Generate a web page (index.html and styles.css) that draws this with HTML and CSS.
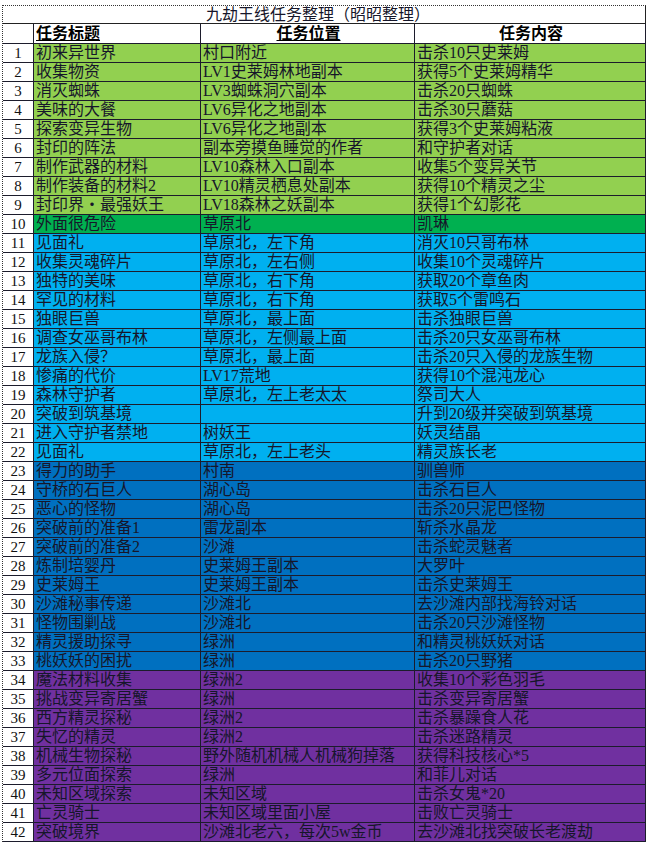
FILE: index.html
```html
<!DOCTYPE html>
<html lang="zh-CN">
<head>
<meta charset="utf-8">
<title>九劫主线任务整理</title>
<link rel="stylesheet" href="styles.css">
</head>
<body>
<div class="sheet">
  <div class="title">九劫王线任务整理（昭昭整理）</div>
  <div class="row head">
    <div class="num"></div>
    <div class="c c-title"><u>任务标题</u></div>
    <div class="c center"><u>任务位置</u></div>
    <div class="c center">任务内容</div>
  </div>
  <div class="row g1"><div class="num">1</div><div class="c">初来异世界</div><div class="c">村口附近</div><div class="c">击杀10只史莱姆</div></div>
  <div class="row g1"><div class="num">2</div><div class="c">收集物资</div><div class="c">LV1史莱姆林地副本</div><div class="c">获得5个史莱姆精华</div></div>
  <div class="row g1"><div class="num">3</div><div class="c">消灭蜘蛛</div><div class="c">LV3蜘蛛洞穴副本</div><div class="c">击杀20只蜘蛛</div></div>
  <div class="row g1"><div class="num">4</div><div class="c">美味的大餐</div><div class="c">LV6异化之地副本</div><div class="c">击杀30只蘑菇</div></div>
  <div class="row g1"><div class="num">5</div><div class="c">探索变异生物</div><div class="c">LV6异化之地副本</div><div class="c">获得3个史莱姆粘液</div></div>
  <div class="row g1"><div class="num">6</div><div class="c">封印的阵法</div><div class="c">副本旁摸鱼睡觉的作者</div><div class="c">和守护者对话</div></div>
  <div class="row g1"><div class="num">7</div><div class="c">制作武器的材料</div><div class="c">LV10森林入口副本</div><div class="c">收集5个变异关节</div></div>
  <div class="row g1"><div class="num">8</div><div class="c">制作装备的材料2</div><div class="c">LV10精灵栖息处副本</div><div class="c">获得10个精灵之尘</div></div>
  <div class="row g1"><div class="num">9</div><div class="c">封印界・最强妖王</div><div class="c">LV18森林之妖副本</div><div class="c">获得1个幻影花</div></div>
  <div class="row g2"><div class="num">10</div><div class="c">外面很危险</div><div class="c">草原北</div><div class="c">凯琳</div></div>
  <div class="row b1"><div class="num">11</div><div class="c">见面礼</div><div class="c">草原北，左下角</div><div class="c">消灭10只哥布林</div></div>
  <div class="row b1"><div class="num">12</div><div class="c">收集灵魂碎片</div><div class="c">草原北，左右侧</div><div class="c">收集10个灵魂碎片</div></div>
  <div class="row b1"><div class="num">13</div><div class="c">独特的美味</div><div class="c">草原北，右下角</div><div class="c">获取20个章鱼肉</div></div>
  <div class="row b1"><div class="num">14</div><div class="c">罕见的材料</div><div class="c">草原北，右下角</div><div class="c">获取5个雷鸣石</div></div>
  <div class="row b1"><div class="num">15</div><div class="c">独眼巨兽</div><div class="c">草原北，最上面</div><div class="c">击杀独眼巨兽</div></div>
  <div class="row b1"><div class="num">16</div><div class="c">调查女巫哥布林</div><div class="c">草原北，左侧最上面</div><div class="c">击杀20只女巫哥布林</div></div>
  <div class="row b1"><div class="num">17</div><div class="c">龙族入侵？</div><div class="c">草原北，最上面</div><div class="c">击杀20只入侵的龙族生物</div></div>
  <div class="row b1"><div class="num">18</div><div class="c">惨痛的代价</div><div class="c">LV17荒地</div><div class="c">获得10个混沌龙心</div></div>
  <div class="row b1"><div class="num">19</div><div class="c">森林守护者</div><div class="c">草原北，左上老太太</div><div class="c">祭司大人</div></div>
  <div class="row b1"><div class="num">20</div><div class="c">突破到筑基境</div><div class="c"></div><div class="c">升到20级并突破到筑基境</div></div>
  <div class="row b1"><div class="num">21</div><div class="c">进入守护者禁地</div><div class="c">树妖王</div><div class="c">妖灵结晶</div></div>
  <div class="row b1"><div class="num">22</div><div class="c">见面礼</div><div class="c">草原北，左上老头</div><div class="c">精灵族长老</div></div>
  <div class="row b2"><div class="num">23</div><div class="c">得力的助手</div><div class="c">村南</div><div class="c">驯兽师</div></div>
  <div class="row b2"><div class="num">24</div><div class="c">守桥的石巨人</div><div class="c">湖心岛</div><div class="c">击杀石巨人</div></div>
  <div class="row b2"><div class="num">25</div><div class="c">恶心的怪物</div><div class="c">湖心岛</div><div class="c">击杀20只泥巴怪物</div></div>
  <div class="row b2"><div class="num">26</div><div class="c">突破前的准备1</div><div class="c">雷龙副本</div><div class="c">斩杀水晶龙</div></div>
  <div class="row b2"><div class="num">27</div><div class="c">突破前的准备2</div><div class="c">沙滩</div><div class="c">击杀蛇灵魅者</div></div>
  <div class="row b2"><div class="num">28</div><div class="c">炼制培婴丹</div><div class="c">史莱姆王副本</div><div class="c">大罗叶</div></div>
  <div class="row b2"><div class="num">29</div><div class="c">史莱姆王</div><div class="c">史莱姆王副本</div><div class="c">击杀史莱姆王</div></div>
  <div class="row b2"><div class="num">30</div><div class="c">沙滩秘事传递</div><div class="c">沙滩北</div><div class="c">去沙滩内部找海铃对话</div></div>
  <div class="row b2"><div class="num">31</div><div class="c">怪物围剿战</div><div class="c">沙滩北</div><div class="c">击杀20只沙滩怪物</div></div>
  <div class="row b2"><div class="num">32</div><div class="c">精灵援助探寻</div><div class="c">绿洲</div><div class="c">和精灵桃妖妖对话</div></div>
  <div class="row b2"><div class="num">33</div><div class="c">桃妖妖的困扰</div><div class="c">绿洲</div><div class="c">击杀20只野猪</div></div>
  <div class="row p1"><div class="num">34</div><div class="c">魔法材料收集</div><div class="c">绿洲2</div><div class="c">收集10个彩色羽毛</div></div>
  <div class="row p1"><div class="num">35</div><div class="c">挑战变异寄居蟹</div><div class="c">绿洲</div><div class="c">击杀变异寄居蟹</div></div>
  <div class="row p1"><div class="num">36</div><div class="c">西方精灵探秘</div><div class="c">绿洲2</div><div class="c">击杀暴躁食人花</div></div>
  <div class="row p1"><div class="num">37</div><div class="c">失忆的精灵</div><div class="c">绿洲2</div><div class="c">击杀迷路精灵</div></div>
  <div class="row p1"><div class="num">38</div><div class="c">机械生物探秘</div><div class="c">野外随机机械人机械狗掉落</div><div class="c">获得科技核心*5</div></div>
  <div class="row p1"><div class="num">39</div><div class="c">多元位面探索</div><div class="c">绿洲</div><div class="c">和菲儿对话</div></div>
  <div class="row p1"><div class="num">40</div><div class="c">未知区域探索</div><div class="c">未知区域</div><div class="c">击杀女鬼*20</div></div>
  <div class="row p1"><div class="num">41</div><div class="c">亡灵骑士</div><div class="c">未知区域里面小屋</div><div class="c">击败亡灵骑士</div></div>
  <div class="row p1"><div class="num">42</div><div class="c">突破境界</div><div class="c">沙滩北老六，每次5w金币</div><div class="c">去沙滩北找突破长老渡劫</div></div>
</div>
</body>
</html>
```

FILE: styles.css
```css
html, body {
  margin: 0;
  padding: 0;
  background: #ffffff;
}

body {
  font-family: "Liberation Serif", "Noto Sans CJK SC", serif;
  font-size: 16px;
  color: #16162a;
}

.sheet {
  margin: 5px 0 0 2px;
  width: 644px;
  box-sizing: border-box;
  border-top: 1px dotted #333;
  border-left: 1px dotted #333;
}

.title {
  box-sizing: border-box;
  height: 18px;
  line-height: 17px;
  text-align: center;
  border-right: 1px solid #222;
  border-bottom: 1px solid #222;
  background: #fff;
  overflow: hidden;
  padding-right: 12px;
}

.row {
  display: grid;
  grid-template-columns: 31px 167px 214px 231px;
  height: 19px;
}

.row > div {
  box-sizing: border-box;
  border-right: 1px solid #1c1c2c;
  border-bottom: 1px solid #1c1c2c;
  line-height: 18px;
  white-space: nowrap;
  overflow: hidden;
}

.row .num {
  background: #fff;
  text-align: center;
  font-size: 15px;
  color: #111;
}

.row .c {
  padding-left: 2px;
}

.head {
  height: 20px;
}

.head > div {
  line-height: 19px;
  background: #fff;
  font-weight: bold;
  color: #000;
}

.head .center {
  text-align: center;
}

.head u {
  text-decoration-thickness: 1px;
  text-underline-offset: 1px;
}

.g1 .c { background: #92d050; }
.g2 .c { background: #00b050; }
.b1 .c { background: #00b0f0; }
.b2 .c { background: #0070c0; }
.p1 .c { background: #7030a0; }
```
